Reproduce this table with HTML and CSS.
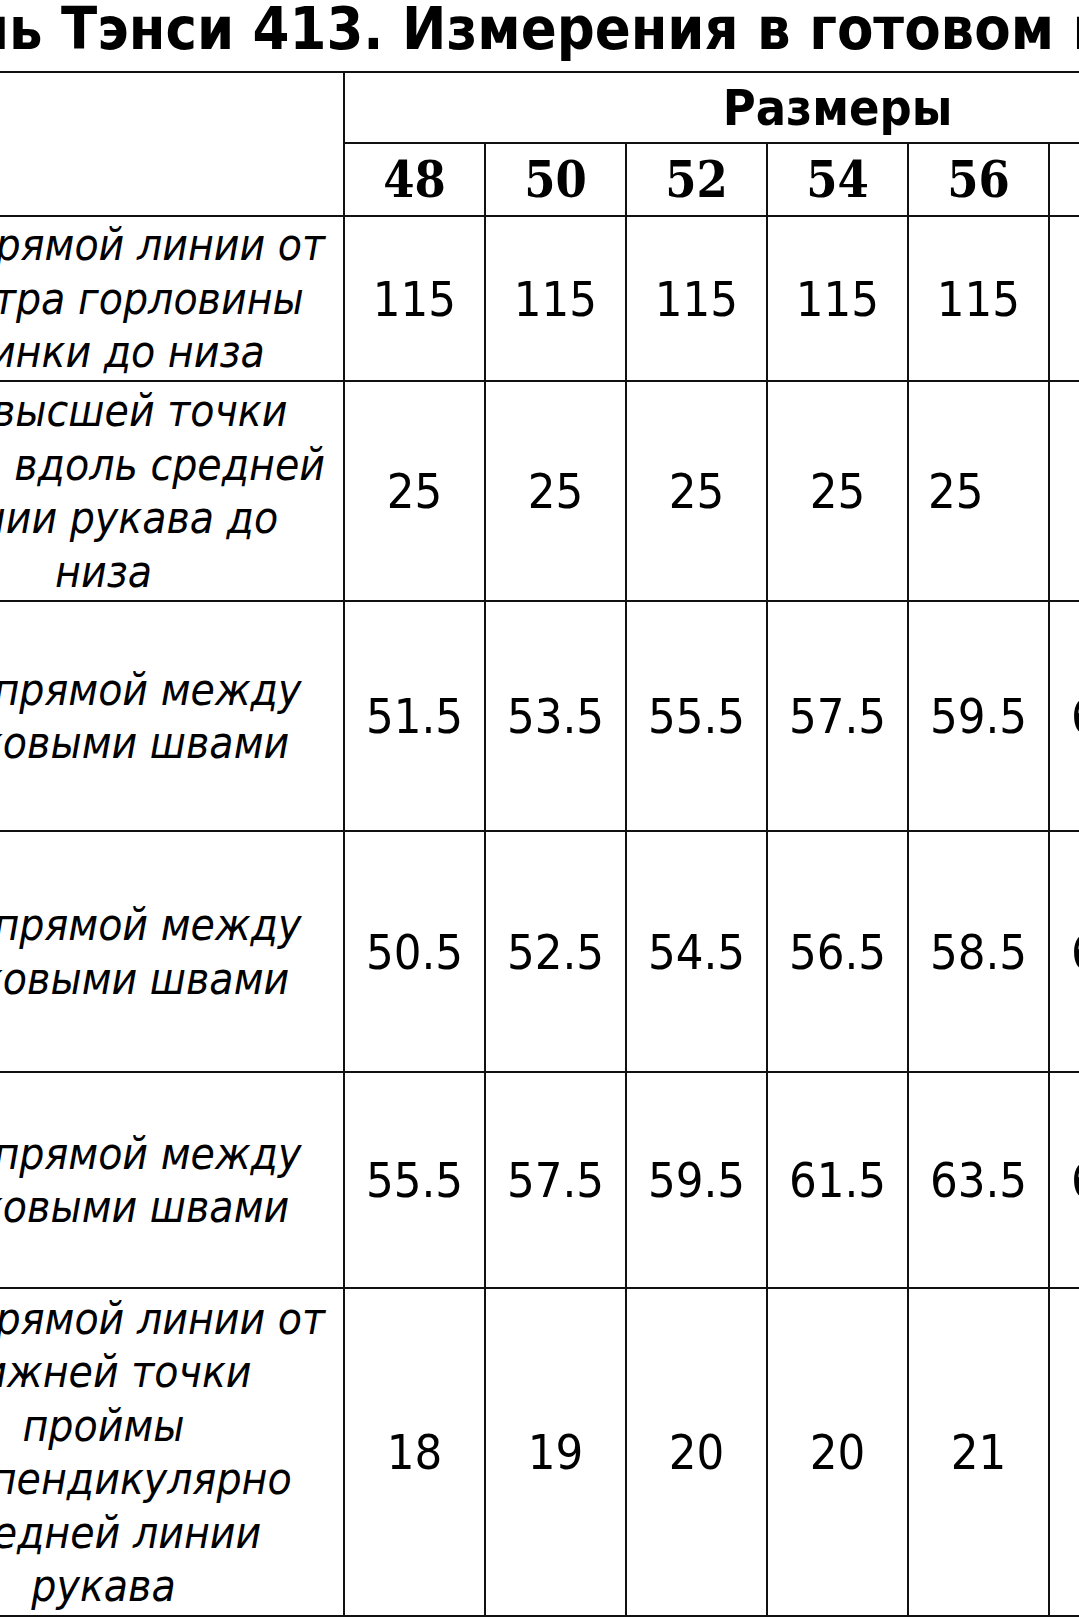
FILE: index.html
```html
<!DOCTYPE html>
<html lang="ru">
<head>
<meta charset="utf-8">
<title>Модель Тэнси 413. Измерения в готовом изделии</title>
<link rel="stylesheet" href="styles.css">
</head>
<body>
<h1 class="title">Модель Тэнси 413. Измерения в готовом изделии</h1>
<table class="sizes">
  <colgroup>
    <col class="c-name">
    <col class="c-size"><col class="c-size"><col class="c-size"><col class="c-size"><col class="c-size"><col class="c-size"><col class="c-size">
  </colgroup>
  <thead>
    <tr class="r-h1">
      <th class="corner" rowspan="2"></th>
      <th class="group" colspan="7">Размеры</th>
    </tr>
    <tr class="r-h2">
      <th class="size">48</th><th class="size">50</th><th class="size">52</th><th class="size">54</th><th class="size">56</th><th class="size">58</th><th class="size">60</th>
    </tr>
  </thead>
  <tbody>
    <tr class="r1">
      <td class="label">&nbsp;&nbsp;по прямой линии от<br>&nbsp;центра горловины<br>спинки до низа</td>
      <td class="num">115</td><td class="num">115</td><td class="num">115</td><td class="num">115</td><td class="num">115</td><td class="num">115</td><td class="num">115</td>
    </tr>
    <tr class="r2">
      <td class="label">&nbsp;от высшей точки<br>оката вдоль средней<br>линии рукава до<br>низа</td>
      <td class="num">25</td><td class="num">25</td><td class="num">25</td><td class="num">25</td><td class="num num-left">25</td><td class="num">25</td><td class="num">25</td>
    </tr>
    <tr class="r3">
      <td class="label">&nbsp;&nbsp;по прямой между<br>&nbsp;боковыми швами</td>
      <td class="num">51.5</td><td class="num">53.5</td><td class="num">55.5</td><td class="num">57.5</td><td class="num">59.5</td><td class="num">61.5</td><td class="num">63.5</td>
    </tr>
    <tr class="r4">
      <td class="label">&nbsp;&nbsp;по прямой между<br>&nbsp;боковыми швами</td>
      <td class="num">50.5</td><td class="num">52.5</td><td class="num">54.5</td><td class="num">56.5</td><td class="num">58.5</td><td class="num">60.5</td><td class="num">62.5</td>
    </tr>
    <tr class="r5">
      <td class="label">&nbsp;&nbsp;по прямой между<br>&nbsp;боковыми швами</td>
      <td class="num">55.5</td><td class="num">57.5</td><td class="num">59.5</td><td class="num">61.5</td><td class="num">63.5</td><td class="num">65.5</td><td class="num">67.5</td>
    </tr>
    <tr class="r6">
      <td class="label">&nbsp;&nbsp;по прямой линии от<br>нижней точки<br>проймы<br>перпендикулярно<br>средней линии<br>рукава</td>
      <td class="num">18</td><td class="num">19</td><td class="num">20</td><td class="num">20</td><td class="num">21</td><td class="num">22</td><td class="num">22</td>
    </tr>
  </tbody>
</table>
</body>
</html>
```
FILE: styles.css
```css
html, body {
  margin: 0;
  padding: 0;
  overflow: hidden;
  background: #fff;
}
body {
  width: 1079px;
  height: 1620px;
  color: #000;
  font-family: "DejaVu Sans Condensed", "DejaVu Sans", sans-serif;
}
.title {
  margin: 0 0 0 -198px;
  height: 71px;
  font-size: 59px;
  font-weight: bold;
  line-height: 58px;
  white-space: nowrap;
}
.sizes {
  margin-left: -138px;
  border-collapse: collapse;
  table-layout: fixed;
  width: 1466px;
}
.c-name { width: 481px; }
.c-size { width: 141px; }
.sizes th,
.sizes td {
  border: 2px solid #111;
  padding: 0;
  text-align: center;
  vertical-align: middle;
  white-space: nowrap;
}
.r-h1 { height: 71px; }
.r-h2 { height: 73px; }
.r1 { height: 165px; }
.r2 { height: 220px; }
.r3 { height: 230px; }
.r4 { height: 241px; }
.r5 { height: 216px; }
.r6 { height: 328px; }
.group {
  font-size: 50px;
  font-weight: bold;
  padding-top: 3px;
}
.size {
  font-family: "DejaVu Serif Condensed", "DejaVu Serif", serif;
  font-size: 50px;
  font-weight: bold;
  padding-top: 8px;
}
.label {
  font-style: italic;
  font-size: 44px;
  line-height: 53.5px;
  padding-top: 11px;
}
.num {
  font-size: 48.5px;
}
.sizes .num-left {
  text-align: left;
  padding-left: 19px;
}
```
